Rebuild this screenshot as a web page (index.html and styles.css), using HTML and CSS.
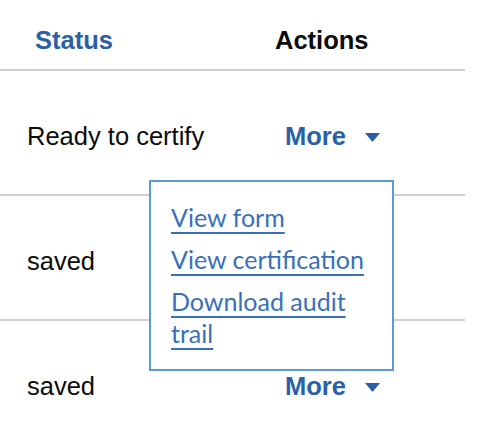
FILE: index.html
```html
<!DOCTYPE html>
<html lang="en">
<head>
<meta charset="utf-8">
<title>Submissions</title>
<link rel="stylesheet" href="styles.css">
</head>
<body>
<div class="table">
  <div class="row head">
    <div class="cell status-h"><a class="sort" href="#">Status</a></div>
    <div class="cell actions-h">Actions</div>
  </div>
  <div class="row body-row open">
    <div class="cell status">Ready to certify</div>
    <div class="cell actions">
      <button class="more" type="button">More<svg class="caret" width="15" height="9" viewBox="0 0 15 9"><polygon points="0,0 15,0 7.5,9"/></svg></button>
    </div>
    <ul class="menu">
      <li><a href="#">View form</a></li>
      <li><a href="#">View certification</a></li>
      <li><a href="#">Download audit trail</a></li>
    </ul>
  </div>
  <div class="row body-row">
    <div class="cell status">saved</div>
    <div class="cell actions"></div>
  </div>
  <div class="row body-row">
    <div class="cell status">saved</div>
    <div class="cell actions">
      <button class="more" type="button">More<svg class="caret" width="15" height="9" viewBox="0 0 15 9"><polygon points="0,0 15,0 7.5,9"/></svg></button>
    </div>
  </div>
</div>
</body>
</html>
```
FILE: styles.css
```css
html, body {
  margin: 0;
  padding: 0;
  background: #ffffff;
}
body {
  font-family: "Liberation Sans", Arial, sans-serif;
  font-size: 25.5px;
  line-height: 30px;
  color: #0b0c0c;
  overflow: hidden;
}
.table {
  width: 465px;
}
.row {
  display: grid;
  grid-template-columns: 265px 200px;
  border-bottom: 2px solid #cfcfcf;
  box-sizing: border-box;
}
.head {
  height: 71px;
  padding-top: 25px;
  font-weight: bold;
}
.status-h { padding-left: 35px; }
.actions-h { padding-left: 10px; }
.sort {
  color: #2b5fa7;
  text-decoration: none;
}
.body-row {
  position: relative;
  height: 125px;
  padding-top: 50px;
}
.status { padding-left: 27px; }
.actions { padding-left: 20px; }
.more {
  font: inherit;
  font-weight: bold;
  line-height: 30px;
  color: #2b5fa7;
  background: none;
  border: 0;
  padding: 0;
  margin: 0;
  display: inline-flex;
  align-items: center;
  cursor: pointer;
}
.caret {
  fill: #2b5fa7;
  margin-left: 19px;
  margin-top: 2px;
}
.menu {
  position: absolute;
  left: 149px;
  top: 109px;
  z-index: 2;
  width: 245px;
  box-sizing: border-box;
  margin: 0;
  padding: 19px 20px 20px 20px;
  list-style: none;
  background: #ffffff;
  border: 2px solid #5c9ad2;
  font-family: Lato, "Noto Sans", sans-serif;
  font-size: 25px;
  line-height: 32px;
  display: flex;
  flex-direction: column;
  gap: 10px;
}
.menu a {
  color: #3871b8;
  text-decoration: underline;
  text-decoration-thickness: 2px;
  text-underline-offset: 5px;
}
```
